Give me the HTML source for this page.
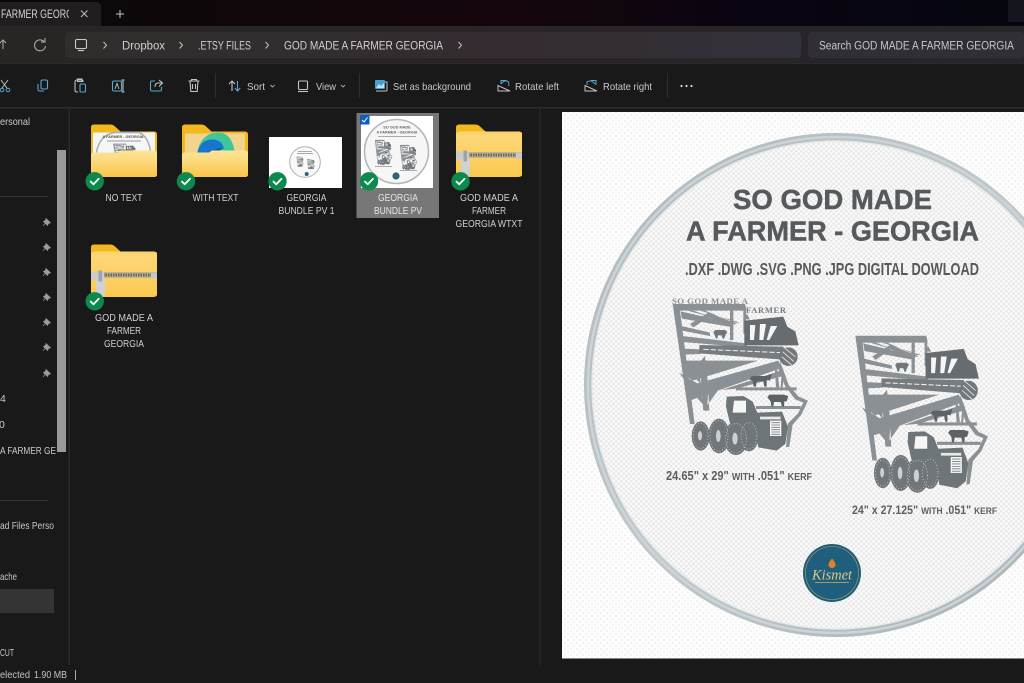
<!DOCTYPE html>
<html><head><meta charset="utf-8"><title>GOD MADE A FARMER GEORGIA</title>
<style>
html,body{margin:0;padding:0;background:#191919;width:1024px;height:683px;overflow:hidden}
svg{display:block}
text{font-family:"Liberation Sans",sans-serif}
</style></head><body>
<svg xmlns="http://www.w3.org/2000/svg" width="1024" height="683" viewBox="0 0 1024 683">
<defs>
<filter id="soft" x="-5%" y="-5%" width="110%" height="110%"><feGaussianBlur stdDeviation=".45"/></filter>
<linearGradient id="top" x1="0" x2="1" y1="0" y2="0"><stop offset="0" stop-color="#0b0809"/><stop offset=".5" stop-color="#14060c"/><stop offset=".72" stop-color="#0b0511"/><stop offset="1" stop-color="#05060f"/></linearGradient>
<linearGradient id="addr" x1="0" x2="1" y1="0" y2="0"><stop offset="0" stop-color="#282625"/><stop offset=".55" stop-color="#2a2327"/><stop offset="1" stop-color="#26262b"/></linearGradient>
<linearGradient id="addrb" x1="0" x2="1" y1="0" y2="0"><stop offset="0" stop-color="#302e2d"/><stop offset=".6" stop-color="#342c30"/><stop offset="1" stop-color="#33313a"/></linearGradient>
<linearGradient id="front" x1="0" x2="0" y1="0" y2="1"><stop offset="0" stop-color="#fde59a"/><stop offset="1" stop-color="#fac54a"/></linearGradient>
<linearGradient id="zip" x1="0" x2="0" y1="0" y2="1"><stop offset="0" stop-color="#fdd87c"/><stop offset="1" stop-color="#fbc950"/></linearGradient>
<linearGradient id="edge" x1="0" x2="1" y1="0" y2="1"><stop offset="0" stop-color="#aeb8bd"/><stop offset=".5" stop-color="#c0c8cc"/><stop offset="1" stop-color="#a5b0b6"/></linearGradient>
<pattern id="dots" width="5" height="5" patternUnits="userSpaceOnUse"><rect width="5" height="5" fill="#fbfbfb"/><rect x="0" y="0" width="2.5" height="2.5" fill="#e8e8e8"/><rect x="2.5" y="2.5" width="2.5" height="2.5" fill="#e8e8e8"/></pattern>
<pattern id="dots2" width="6" height="6" patternUnits="userSpaceOnUse"><rect width="6" height="6" fill="#fdfdfd"/><rect x="0" y="0" width="2" height="2" fill="#f2f2f2"/><rect x="3" y="3" width="2" height="2" fill="#f2f2f2"/></pattern>

<g id="ga">
 <g fill="#8b9094">
  <path d="M68 42H285L290 62H90L134 402H120Z"/>
  <path d="M290 70L300 88H285ZM390 215L400 240 416 285 446 320 474 332 454 374 428 404 418 470 408 472 414 400 444 370 460 338 436 328 406 290 386 240Z"/>
  <path d="M92 64L250 100 250 112 96 86ZM112 62L245 98 232 98 130 62ZM150 62L270 98 255 98 165 62Z"/>
  <path d="M120 102L175 68 262 102 245 104 175 82 130 112Z"/>
  <path d="M240 62H250V150H240ZM280 62H288V130H280Z"/>
  <path d="M94 108L180 128 180 138 96 122ZM96 138L290 160 290 172 98 156Z"/>
  <path d="M100 176L152 178 152 192 102 194Z"/>
  <path d="M104 212L325 212 128 272 108 256Z"/>
  <path d="M114 288L385 212 395 234 124 330Z"/>
  <path d="M215 300L392 242 398 258 260 296Z"/>
  <path d="M150 215L165 198 172 260 178 362 160 362 155 300ZM88 248L150 285 160 345 140 322ZM232 262L175 300 172 345 192 318ZM122 215L150 250 152 282 130 258Z"/>
  <path d="M258 292H440V301H258ZM318 348H452V357H318Z"/>
  <path d="M375 240H382L388 292H378ZM395 250L402 252 398 292H392Z"/>
 </g>
 <path d="M148 165L400 170 412 210 148 190Z" fill="#767c80"/>
 <path d="M160 178L395 188" stroke="#f2f2f2" stroke-width="3" stroke-dasharray="16 6"/>
 <path d="M283 92L400 80 412 110 436 124 446 166 283 166Z" fill="#666c70"/>
 <circle cx="415" cy="200" r="28" fill="#72787c"/>
 <path d="M398 185L432 215M395 200L425 225M405 175L436 200" stroke="#e8e8e8" stroke-width="2.500"/>
 <path d="M298 268L305 258 350 258 365 252 360 272 350 270 350 290H343L340 274 320 274 318 290H311L308 272Z" fill="#5c6266"/>
 <path d="M352 322L358 314 400 314 415 318 410 334 403 334 402 350H396L392 336 372 336 370 350H364L362 334Z" fill="#5c6266"/>
 <path d="M190 126L196 120 225 120 232 126 226 136 222 146H218L215 136 204 136 202 146H198Z" fill="#70767a"/>
 <path d="M230 320L280 318 308 335 322 368 396 365 414 410 406 462 380 482 325 472 315 410 240 400 228 350Z" fill="#6e7478"/>
 <g fill="#f6f6f6">
  <path d="M300 105H316L312 150H300ZM330 102H348L340 150H328ZM362 108H382L358 150H350Z"/>
  <path d="M252 332H288V368H248Z"/>
  <path d="M360 392H394V438H360Z"/>
 </g>
 <path d="M364 398H390M364 405H390M364 412H390M364 419H390M364 426H390M364 433H390" stroke="#73797d" stroke-width="2.500"/>
 <path d="M330 380H392V388H330Z" fill="#e8e8e8"/>
 <g fill="#70767a">
  <ellipse cx="152" cy="438" rx="27" ry="44"/>
  <ellipse cx="207" cy="438" rx="32" ry="52"/>
  <ellipse cx="258" cy="445" rx="36" ry="50"/>
  <ellipse cx="297" cy="438" rx="29" ry="46"/>
 </g>
 <g fill="none" stroke="#dadada" stroke-width="2" stroke-dasharray="3 6">
  <ellipse cx="152" cy="438" rx="22" ry="38"/>
  <ellipse cx="207" cy="438" rx="27" ry="46"/>
  <ellipse cx="258" cy="445" rx="31" ry="44"/>
  <ellipse cx="297" cy="438" rx="24" ry="40"/>
 </g>
 <g fill="#cfcfcf">
  <ellipse cx="150" cy="437" rx="6" ry="14"/><ellipse cx="205" cy="438" rx="7" ry="18"/><ellipse cx="255" cy="446" rx="8" ry="18"/>
 </g>
</g>

<g id="folderBack"><path d="M0 3Q0 0 3 0H19Q22 0 24 2L29.500 7H63Q66 7 66 10V50Q66 52 64 52H2Q0 52 0 50Z" fill="#f4b81f"/></g>
<g id="frontP"><path d="M0 31Q0 28 3 28H27L30 26H63Q66 26 66 29V50Q66 52.500 63.500 52.500H2.500Q0 52.500 0 50Z" fill="url(#front)"/></g>
<g id="zipF">
 <use href="#folderBack"/>
 <path d="M0 11Q0 7 4 7H62Q66 7 66 11V49Q66 52.500 62.500 52.500H3.500Q0 52.500 0 49Z" fill="url(#zip)"/>
 <path d="M0 8H66V10H0Z" fill="#fbd36b"/>
 <rect x="6" y="27.500" width="60" height="6" fill="#bdb397"/>
 <path d="M12 30.500H62" stroke="#6d644e" stroke-width="3" stroke-dasharray="1.500 1"/>
 <rect x="0" y="27" width="13" height="8" rx="2" fill="#c9ccce"/>
 <rect x="60" y="28" width="6" height="6" fill="#c5c8ca"/>
 <rect x="5" y="34" width="9" height="17" rx="1.500" fill="#cfd2d3"/>
 <rect x="7.500" y="26" width="3.500" height="11" fill="#a0a2a4"/>
</g>
<g id="badge"><circle r="9.200" fill="#0c8a4e"/><path d="M-4 .3L-1.200 3 4 -2.500" fill="none" stroke="#fff" stroke-width="1.800" stroke-linecap="round" stroke-linejoin="round"/></g>
<g id="pin"><path d="M-1 -3.500L3.500 .8 1.500 1.400 .5 3.500-3.500 -.5-1.500 -1.500ZM-2 1.500L-4 3.800" fill="#9c9c9c" stroke="#9c9c9c" stroke-width=".7"/></g>
<g id="preview">
 <rect width="72" height="72" fill="#fff"/>
 <circle cx="35.500" cy="35.500" r="32" fill="#f6f6f6" stroke="#b2b9bd" stroke-width="1.600"/>
 <text x="36" y="12.500" text-anchor="middle" font-size="3.800" font-weight="700" fill="#666">SO GOD MADE</text>
 <text x="36" y="17.500" text-anchor="middle" font-size="3.800" font-weight="700" fill="#666">A FARMER - GEORGIA</text>
 <rect x="17" y="20" width="38" height="1" fill="#aaa"/>
 <use href="#ga" transform="translate(11 21.500) scale(.043 .056)"/>
 <use href="#ga" transform="translate(36 26.500) scale(.043 .056)"/>
 <rect x="14" y="50" width="17" height="1" fill="#aaa"/><rect x="39" y="54" width="17" height="1" fill="#aaa"/>
 <circle cx="35" cy="60" r="3.600" fill="#2b6477"/>
</g>
</defs>

<rect width="1024" height="683" fill="#191919"/>

<!-- title strip -->
<rect width="1024" height="27" fill="url(#top)"/>
<path d="M0 2H96Q101 2 101 7V26H0Z" fill="#201e1f"/>
<rect x="1008" y="0" width="16" height="22" fill="#15151d"/>
<svg x="0" y="0" width="69" height="27"><text x="1" y="18" font-size="11.500" fill="#d4d4d4" textLength="72" lengthAdjust="spacingAndGlyphs">FARMER GEORG</text></svg>
<path d="M81 10.500L87.500 17M87.500 10.500L81 17" stroke="#bbb" stroke-width="1"/>
<path d="M120 10V18M116 14H124" stroke="#c8c8c8" stroke-width="1"/>

<!-- address row -->
<rect y="26" width="1024" height="38" fill="url(#addr)"/>
<rect x="65" y="32" width="736" height="26" rx="4" fill="url(#addrb)"/>
<rect x="808" y="32" width="216" height="26" rx="4" fill="#312f36"/>
<path d="M3 49V40M0 43L3 40 6 43" fill="none" stroke="#ababab" stroke-width="1"/>
<path d="M44 41.500A5.500 5.500 0 1 0 45.500 46M45 38V42H41" fill="none" stroke="#b4b4b4" stroke-width="1"/>
<rect x="75.500" y="39.500" width="11" height="9" rx="1.500" fill="none" stroke="#c8c8c8" stroke-width="1.100"/><path d="M78 50.500H84" stroke="#c8c8c8" stroke-width="1.200"/>
<g fill="none" stroke="#c4c4c4" stroke-width="1"><path d="M103.500 42L106.500 45.200 103.500 48.500"/><path d="M179.500 42L182.500 45.200 179.500 48.500"/><path d="M265.500 42L268.500 45.200 265.500 48.500"/><path d="M458.500 42L461.500 45.200 458.500 48.500"/></g>
<g font-size="11.500" fill="#d0d0d0">
<text x="122" y="49.500" textLength="43" lengthAdjust="spacingAndGlyphs">Dropbox</text>
<text x="198" y="49.500" textLength="53" lengthAdjust="spacingAndGlyphs">.ETSY FILES</text>
<text x="284" y="49.500" textLength="159" lengthAdjust="spacingAndGlyphs">GOD MADE A FARMER GEORGIA</text>
<text x="819" y="49.500" textLength="195" lengthAdjust="spacingAndGlyphs" fill="#c6c6c6">Search GOD MADE A FARMER GEORGIA</text>
</g>

<!-- toolbar -->
<rect y="64" width="1024" height="43" fill="#191919"/>
<rect y="63" width="1024" height="1" fill="#2b2b2b"/>
<rect y="107" width="1024" height="1.500" fill="#2d2d2d"/>
<rect x="215" y="73" width="1" height="25" fill="#2e2e2e"/><rect x="359" y="73" width="1" height="25" fill="#2e2e2e"/><rect x="667" y="73" width="1" height="25" fill="#2e2e2e"/>
<!-- scissors -->
<g fill="none" stroke-width="1"><path d="M1 80L7 88M8 80L2 88" stroke="#bcbcbc"/><circle cx="2" cy="90" r="1.800" stroke="#5aa7cf"/><circle cx="8" cy="90" r="1.800" stroke="#5aa7cf"/></g>
<!-- copy -->
<g fill="none" stroke-width="1.100"><rect x="41" y="80" width="6.500" height="9" rx="1.500" stroke="#5aa7cf"/><path d="M38 84V89Q38 91 40 91H44" stroke="#5aa7cf"/></g>
<!-- paste -->
<g fill="none" stroke-width="1.100"><path d="M83 82V81Q83 80 82 80H77Q75 80 75 82V90Q75 92 77 92H78" stroke="#c0c0c0"/><rect x="77.500" y="79" width="4.500" height="2.500" stroke="#c0c0c0"/><rect x="80" y="84" width="5.500" height="8" rx="1" stroke="#5aa7cf"/></g>
<!-- rename -->
<g fill="none" stroke-width="1.100"><rect x="112.500" y="81" width="9" height="10" rx="1.500" stroke="#5aa7cf"/><path d="M123 80V92M121.500 80H124.500M121.500 92H124.500" stroke="#c0c0c0"/><path d="M115 89L117 83.500 119 89" stroke="#c0c0c0" stroke-width=".9"/></g>
<!-- share -->
<g fill="none" stroke-width="1.100"><path d="M155 81H152Q150.500 81 150.500 83V89Q150.500 91 152 91H160Q161.500 91 161.500 89V87" stroke="#5aa7cf"/><path d="M159 80L162.500 83 159 86.500M162 83H158Q155 83 155 87" stroke="#c0c0c0"/></g>
<!-- delete -->
<g fill="none" stroke="#c4c4c4" stroke-width="1.100"><path d="M188.500 81H199.500M191.500 81V79.500H196.500V81M190 81L190.800 91.500H197.200L198 81M192.500 84V89M195.500 84V89"/></g>
<!-- sort -->
<g fill="none" stroke-width="1.100"><path d="M232 91V81M229 84L232 81 235 84" stroke="#c4c4c4"/><path d="M237.500 81V91M234.800 88L237.500 91 240.200 88" stroke="#5aa7cf"/></g>
<path d="M270.500 85L272.500 87 274.500 85" fill="none" stroke="#aaa" stroke-width=".9"/>
<!-- view -->
<g fill="none" stroke="#c4c4c4" stroke-width="1.100"><rect x="298.500" y="81" width="9" height="8.500" rx="1"/><path d="M298 91.500H308"/></g>
<path d="M341 85L343 87 345 85" fill="none" stroke="#aaa" stroke-width=".9"/>
<!-- background -->
<g><rect x="375" y="80" width="10" height="9" rx="1" fill="#4a9fd0"/><path d="M376 88L379 84 381 86 384 83V88Z" fill="#bfe0f0"/><path d="M385 82H387V90Q387 91 386 91H376" fill="none" stroke="#c4c4c4" stroke-width="1"/></g>
<!-- rotate icons -->
<g fill="none" stroke-width="1"><path d="M498 91H510L498 85.500Z" stroke="#c4c4c4"/><path d="M501 84Q505 79 508.500 82L509 86M506.500 80.500H501V84" stroke="#5aa7cf"/></g>
<g fill="none" stroke-width="1"><path d="M585 91H597L585 85.500Z" stroke="#c4c4c4"/><path d="M595 84Q591 79 587 82L587 85M591 80.500H596V85" stroke="#5aa7cf"/></g>
<g font-size="10.500" fill="#c8c8c8">
<text x="247" y="90" textLength="18" lengthAdjust="spacingAndGlyphs">Sort</text>
<text x="316" y="90" textLength="20" lengthAdjust="spacingAndGlyphs">View</text>
<text x="393" y="90" textLength="78" lengthAdjust="spacingAndGlyphs">Set as background</text>
<text x="515" y="90" textLength="44" lengthAdjust="spacingAndGlyphs">Rotate left</text>
<text x="603" y="90" textLength="49" lengthAdjust="spacingAndGlyphs">Rotate right</text>
</g>
<g fill="#dcdcdc"><circle cx="681.500" cy="86" r="1.100"/><circle cx="686.500" cy="86" r="1.100"/><circle cx="691.500" cy="86" r="1.100"/></g>

<!-- sidebar -->
<rect x="68.500" y="108" width="1.500" height="557" fill="#2a2a2a"/>
<rect x="57" y="150" width="9" height="302" fill="#9a9a9a"/>
<rect x="0" y="196" width="48" height="1" fill="#363636"/>
<rect x="0" y="500" width="48" height="1" fill="#363636"/>
<rect x="0" y="589" width="54" height="24" fill="#343434"/>
<g font-size="10.500" fill="#c8c8c8">
<text x="0" y="125" textLength="30" lengthAdjust="spacingAndGlyphs">ersonal</text>
<text x="0" y="402">4</text>
<text x="-1" y="428">0</text>
<text x="0" y="454" textLength="56" lengthAdjust="spacingAndGlyphs">A FARMER GE</text>
<text x="0" y="529" textLength="54" lengthAdjust="spacingAndGlyphs">ad Files Perso</text>
<text x="0" y="580" textLength="17" lengthAdjust="spacingAndGlyphs">ache</text>
<text x="0" y="656" textLength="14" lengthAdjust="spacingAndGlyphs">CUT</text>
</g>
<use href="#pin" x="47" y="222"/><use href="#pin" x="47" y="247"/><use href="#pin" x="47" y="272"/><use href="#pin" x="47" y="297"/><use href="#pin" x="47" y="322"/><use href="#pin" x="47" y="347"/><use href="#pin" x="47" y="373"/>

<!-- selection -->
<rect x="356.500" y="113" width="82.500" height="105" fill="#777"/>

<!-- folder 1 -->
<g transform="translate(91 124.500)">
 <use href="#folderBack"/>
 <rect x="2" y="8" width="62" height="24" fill="#f6f6f6"/>
 <path d="M5 30Q8 10 24 8H48Q58 12 60 30" fill="none" stroke="#a9b0b4" stroke-width="1.500"/>
 <text x="32" y="13.500" text-anchor="middle" font-size="3.800" font-weight="700" fill="#555">A FARMER - GEORGIA</text>
 <rect x="16" y="16" width="34" height="1" fill="#999"/>
 <use href="#ga" transform="translate(18 17) scale(.06 .05)"/>
 <use href="#frontP"/>
</g>
<!-- folder 2 -->
<g transform="translate(182 124.500)">
 <use href="#folderBack"/>
 <rect x="3" y="9" width="60" height="22" fill="#f3d48e"/>
 <path d="M15 30Q18 8 37 8Q51 9 53 30Z" fill="#3fc69a"/>
 <path d="M15 31Q17 14 32 15Q40 16 42 24Q33 22 30 31Z" fill="#1776cc"/>
 <path d="M30 31Q32 22 42 24Q36 25 36 31Z" fill="#0f55a0"/>
 <use href="#frontP"/>
</g>
<!-- thumb 3 -->
<rect x="269" y="137" width="73" height="51" fill="#fff"/>
<g transform="translate(289 146)">
 <circle cx="16" cy="16" r="15.300" fill="#f9f9f9" stroke="#a9b0b4" stroke-width="1"/>
 <rect x="9" y="5" width="14" height="1" fill="#aaa"/><rect x="8" y="7" width="16" height="1" fill="#aaa"/>
 <use href="#ga" transform="translate(6.300 9.700) scale(.018 .023)"/>
 <use href="#ga" transform="translate(16.600 12) scale(.02 .023)"/>
 <circle cx="17.700" cy="28" r="2" fill="#2b6477"/>
</g>
<!-- thumb 4 -->
<use href="#preview" x="361" y="116"/>
<rect x="360" y="115" width="9.500" height="9.500" fill="#0b5ec0"/>
<path d="M362 120L364 122 367.500 117.500" fill="none" stroke="#fff" stroke-width="1"/>
<!-- zip folders -->
<use href="#zipF" x="456" y="124.500"/>
<use href="#zipF" x="91" y="244.500"/>
<!-- badges -->
<use href="#badge" x="94.700" y="181.300"/><use href="#badge" x="186" y="181.300"/><use href="#badge" x="277.500" y="181.300"/><use href="#badge" x="369" y="181.300"/><use href="#badge" x="460.500" y="181.300"/><use href="#badge" x="94.700" y="301.300"/>
<!-- labels -->
<g font-size="10.500" fill="#cfcfcf" text-anchor="middle">
<text x="124" y="201" textLength="37" lengthAdjust="spacingAndGlyphs">NO TEXT</text>
<text x="215.500" y="201" textLength="46" lengthAdjust="spacingAndGlyphs">WITH TEXT</text>
<text x="306.500" y="201" textLength="40" lengthAdjust="spacingAndGlyphs">GEORGIA</text>
<text x="306.500" y="214" textLength="56" lengthAdjust="spacingAndGlyphs">BUNDLE PV 1</text>
<text x="398" y="201" textLength="40" lengthAdjust="spacingAndGlyphs" fill="#e4e4e4">GEORGIA</text>
<text x="398" y="214" textLength="48" lengthAdjust="spacingAndGlyphs" fill="#e4e4e4">BUNDLE PV</text>
<text x="489" y="201" textLength="58" lengthAdjust="spacingAndGlyphs">GOD MADE A</text>
<text x="489" y="214" textLength="34" lengthAdjust="spacingAndGlyphs">FARMER</text>
<text x="489" y="227" textLength="67" lengthAdjust="spacingAndGlyphs">GEORGIA WTXT</text>
<text x="124" y="321" textLength="58" lengthAdjust="spacingAndGlyphs">GOD MADE A</text>
<text x="124" y="334" textLength="34" lengthAdjust="spacingAndGlyphs">FARMER</text>
<text x="124" y="347" textLength="40" lengthAdjust="spacingAndGlyphs">GEORGIA</text>
</g>

<!-- preview pane -->
<rect x="539" y="108" width="1.500" height="557" fill="#262626"/>
<rect x="562" y="112" width="462" height="546.500" fill="url(#dots2)"/>
<circle cx="836" cy="385" r="248" fill="url(#dots)" stroke="url(#edge)" stroke-width="8"/>
<circle cx="836" cy="385" r="248" fill="none" stroke="#cdd4d8" stroke-width="2.500"/>
<circle cx="836" cy="385" r="244" fill="none" stroke="#e4e7e9" stroke-width="1.500"/>

<g fill="#575a5c" stroke="#575a5c" stroke-width=".5" font-weight="700">
<text x="733" y="209" font-size="28" textLength="199" lengthAdjust="spacingAndGlyphs">SO GOD MADE</text>
<text x="686" y="240.500" font-size="28" textLength="293" lengthAdjust="spacingAndGlyphs">A FARMER - GEORGIA</text>
<text x="685" y="275" font-size="17.500" stroke-width="0" textLength="294" lengthAdjust="spacingAndGlyphs">.DXF .DWG .SVG .PNG .JPG DIGITAL DOWLOAD</text>
</g>

<use href="#ga" filter="url(#soft)" transform="translate(650 290) scale(.3333)"/>
<text x="672" y="304" font-size="8.800" font-weight="700" fill="#8a8f92" textLength="76" lengthAdjust="spacing" style="font-family:'Liberation Serif',serif">SO GOD MADE A</text>
<text x="746" y="313" font-size="8.500" font-weight="700" fill="#777c80" textLength="40" lengthAdjust="spacing" style="font-family:'Liberation Serif',serif">FARMER</text>
<use href="#ga" filter="url(#soft)" transform="translate(840 320) scale(.3333) translate(48 45) scale(.98 1.04) translate(-70 -40)"/>

<g fill="#5c5f61" font-weight="700">
<text x="666" y="480" font-size="13" textLength="146" lengthAdjust="spacingAndGlyphs">24.65" x 29" <tspan font-size="10.500">WITH</tspan> .051" <tspan font-size="10.500">KERF</tspan></text>
<text x="852" y="514" font-size="12" textLength="145" lengthAdjust="spacingAndGlyphs">24" x 27.125" <tspan font-size="9.500">WITH</tspan> .051" <tspan font-size="9.500">KERF</tspan></text>
</g>

<!-- logo -->
<circle cx="832" cy="573" r="29" fill="#1d5f7d"/>
<circle cx="832" cy="573" r="26.500" fill="none" stroke="#b89a55" stroke-width=".6"/>
<path d="M832 558.500Q836 563 835.500 565.500A3.700 3.700 0 0 1 828.500 565.500Q828 563 832 558.500Z" fill="#e47f2a"/>
<text x="832" y="579.500" text-anchor="middle" font-size="15" font-style="italic" fill="#e9c27f" textLength="40" lengthAdjust="spacingAndGlyphs" style="font-family:'Liberation Serif',serif">Kismet</text>
<rect x="815" y="582" width="34" height="1" fill="#c9a86a" opacity=".8"/>

<!-- status -->
<g font-size="10" fill="#c2c2c2">
<text x="0" y="678" textLength="30" lengthAdjust="spacingAndGlyphs">elected</text>
<text x="34" y="678" textLength="33" lengthAdjust="spacingAndGlyphs">1.90 MB</text>
</g>
<rect x="75" y="670" width="1" height="10" fill="#aaa"/>
</svg>
</body></html>
